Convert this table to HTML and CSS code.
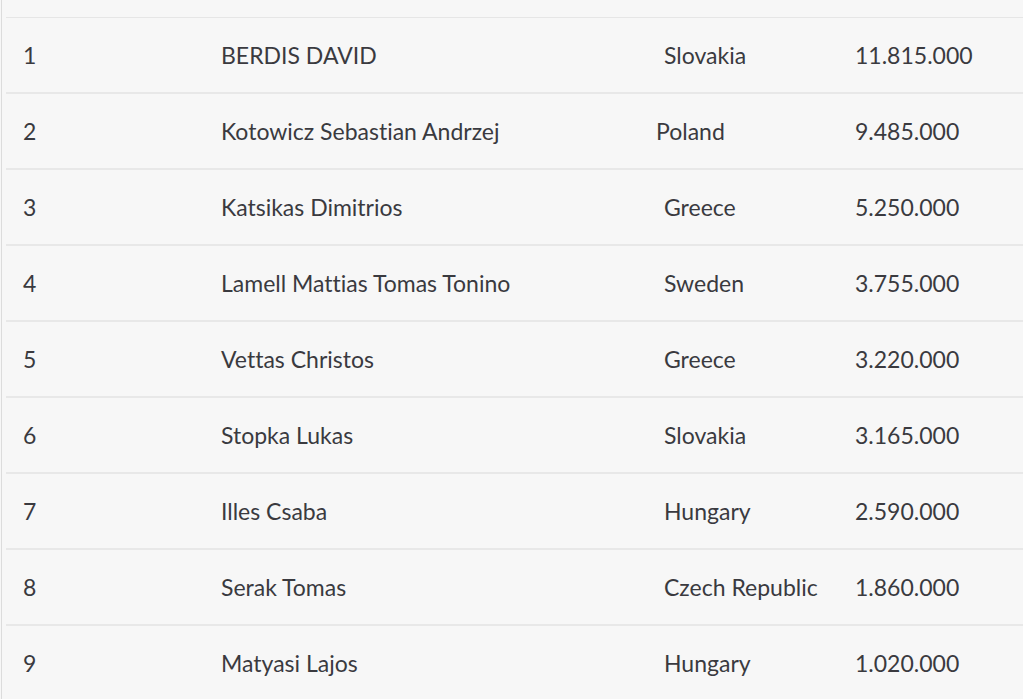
FILE: index.html
```html
<!DOCTYPE html>
<html>
<head>
    <title>Ranking</title>
    <meta charset="UTF-8">
    <meta name="viewport" content="width=device-width, initial-scale=1.0">
    <link rel="stylesheet" href="styles.css">
</head>
<body>
  <div class="board">
    <div class="table">
      <div class="top"></div>
      <div class="row"><span class="pos">1</span><span class="name">BERDIS DAVID</span><span class="country">Slovakia</span><span class="amount">11.815.000</span></div>
      <div class="row"><span class="pos">2</span><span class="name">Kotowicz Sebastian Andrzej</span><span class="country flush">Poland</span><span class="amount">9.485.000</span></div>
      <div class="row"><span class="pos">3</span><span class="name">Katsikas Dimitrios</span><span class="country">Greece</span><span class="amount">5.250.000</span></div>
      <div class="row"><span class="pos">4</span><span class="name">Lamell Mattias Tomas Tonino</span><span class="country">Sweden</span><span class="amount">3.755.000</span></div>
      <div class="row"><span class="pos">5</span><span class="name">Vettas Christos</span><span class="country">Greece</span><span class="amount">3.220.000</span></div>
      <div class="row"><span class="pos">6</span><span class="name">Stopka Lukas</span><span class="country">Slovakia</span><span class="amount">3.165.000</span></div>
      <div class="row"><span class="pos">7</span><span class="name">Illes Csaba</span><span class="country">Hungary</span><span class="amount">2.590.000</span></div>
      <div class="row"><span class="pos">8</span><span class="name">Serak Tomas</span><span class="country">Czech Republic</span><span class="amount">1.860.000</span></div>
      <div class="row"><span class="pos">9</span><span class="name">Matyasi Lajos</span><span class="country">Hungary</span><span class="amount">1.020.000</span></div>
    </div>
  </div>
</body>
</html>
```
FILE: styles.css
```css
/* Basic Reset */
* {
    box-sizing: border-box;
    margin: 0;
    padding: 0;
    font-family: 'Lato', sans-serif;
}

body, html {
    height: 100%;
    background-color: #f7f7f7;
    color: #3a3a3f;
    overflow: hidden;
}

/* Board with thin left rule */
.board {
    margin-left: 1px;
    border-left: 1px solid #dcdcdc;
    height: 100%;
    padding-left: 4px;
}

.top {
    height: 18px;
    border-bottom: 1px solid #e6e6e6;
}

/* Rows */
.row {
    display: grid;
    grid-template-columns: 215px 435px 199px 1fr;
    align-items: center;
    height: 76px;
    border-bottom: 2px solid #e8e8e8;
    font-size: 23px;
    font-variant-ligatures: none;
    white-space: nowrap;
}

.pos {
    padding-left: 17px;
}

.country {
    padding-left: 8px;
}

.country.flush {
    padding-left: 0;
}
```
